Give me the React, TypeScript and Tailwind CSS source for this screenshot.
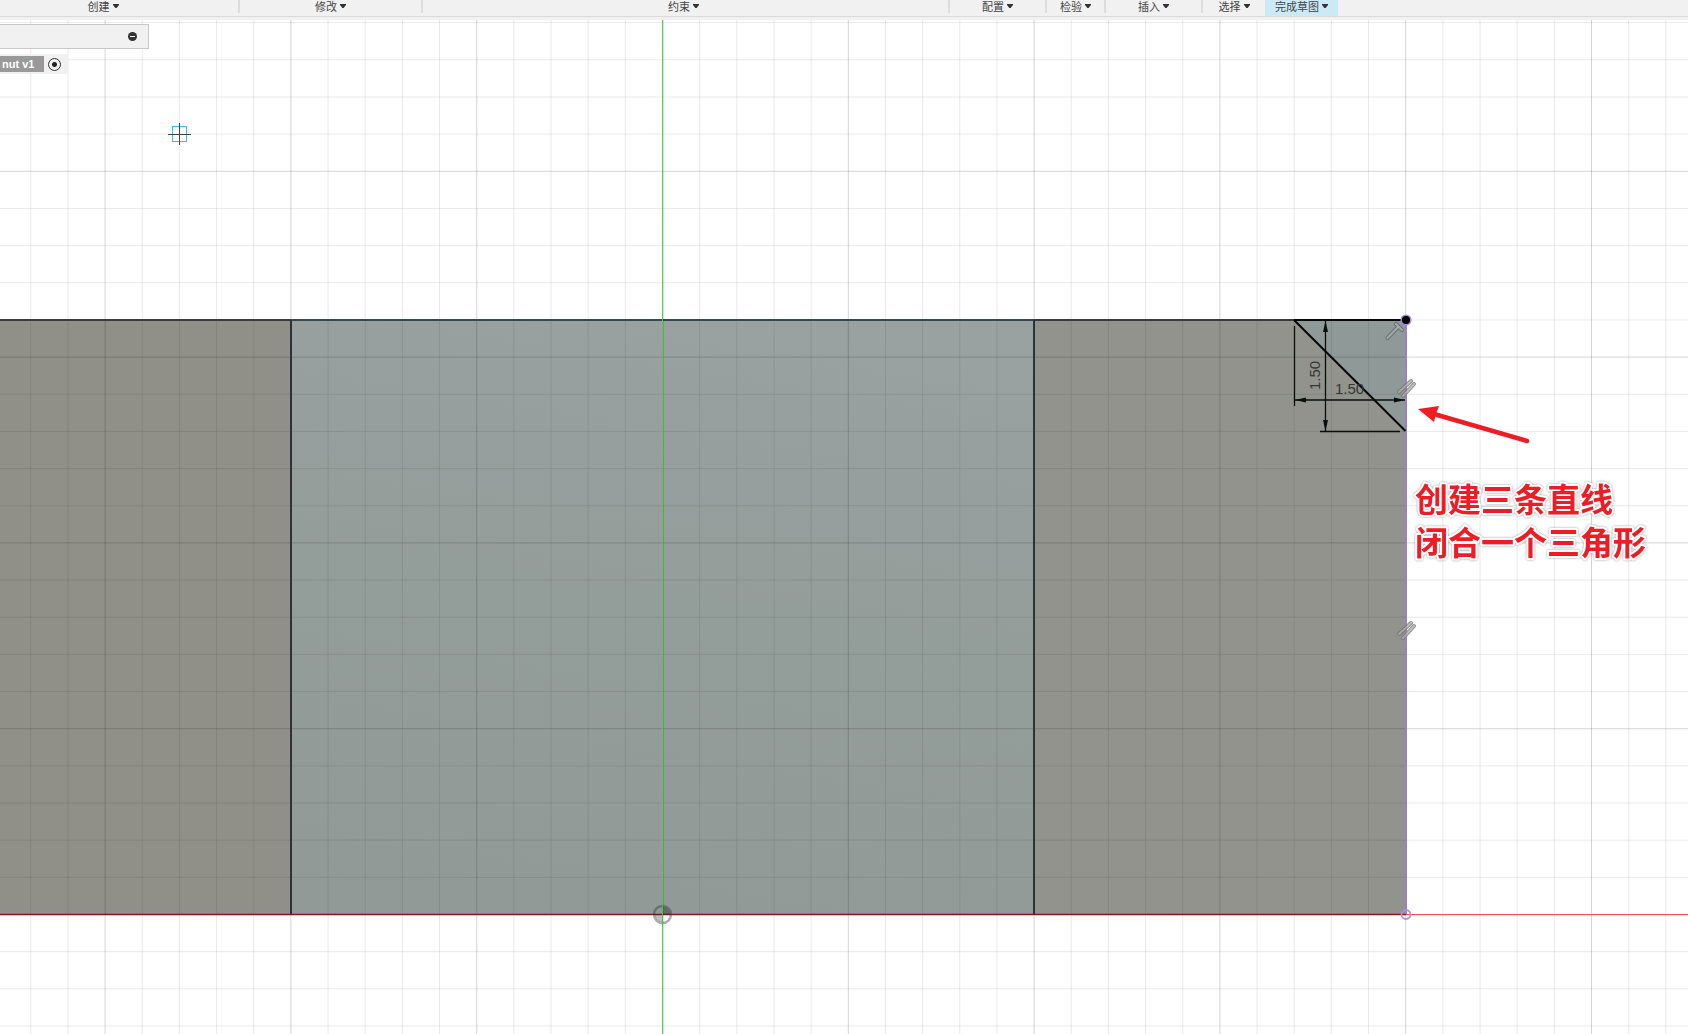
import React from "react";

const ORIGIN_X = 662.5;
const ORIGIN_Y = 894.5;
const CELL = 37.16;

const columns = Array.from({ length: 84 }, (_, i) => i - 17);
const rows = Array.from({ length: 50 }, (_, i) => i - 25);

const groups = [
  { label: "创建", width: "w-[240px]", inner: "pr-8" },
  { label: "修改", width: "w-[183px]", inner: "" },
  { label: "约束", width: "w-[527px]", inner: "pr-1" },
  { label: "配置", width: "w-[97px]", inner: "" },
  { label: "检验", width: "w-[59px]", inner: "" },
  { label: "插入", width: "w-[97px]", inner: "" },
];

function ToolButton({ label }: { label: string }) {
  return (
    <button type="button" className="flex h-4 items-start gap-[3px] whitespace-nowrap text-[11px] leading-[14px] text-[#444]">
      {label}
      <svg width="6" height="4" viewBox="0 0 6 4" className="mt-1" aria-hidden="true">
        <path d="M0 0h6v1L3.6 4H2.4L0 1z" fill="#333" />
      </svg>
    </button>
  );
}

function Toolbar() {
  return (
    <header className="flex h-5 shrink-0 flex-col overflow-hidden bg-[#f1f1f1]">
      <nav className="flex h-[17px] border-b border-[#dadada]">
        {groups.map((g) => (
          <div key={g.label} className={`flex shrink-0 ${g.width}`}>
            <div className={`flex grow justify-center ${g.inner}`}>
              <ToolButton label={g.label} />
            </div>
            <div className="h-[13px] w-0.5 bg-[#dcdcdc]" />
          </div>
        ))}
        <div className="flex w-[62px] shrink-0 justify-center">
          <ToolButton label="选择" />
        </div>
        <div className="flex w-[73px] shrink-0 justify-center bg-[#cbeaf6]">
          <ToolButton label="完成草图" />
        </div>
      </nav>
    </header>
  );
}

function Grid() {
  return (
    <g stroke="#000">
      {columns.filter((i) => i !== 0).map((i) => (
        <line key={`c${i}`} x1={ORIGIN_X + i * CELL} x2={ORIGIN_X + i * CELL} y1="0" y2="100%" strokeOpacity={i % 5 ? 0.085 : 0.17} />
      ))}
      {rows.filter((i) => i !== 0).map((i) => (
        <line key={`r${i}`} x1="0" x2="100%" y1={ORIGIN_Y + i * CELL} y2={ORIGIN_Y + i * CELL} strokeOpacity={i % 5 ? 0.085 : 0.17} />
      ))}
    </g>
  );
}

function Parallel({ x, y }: { x: number; y: number }) {
  return (
    <g transform={`translate(${x} ${y})`} strokeLinecap="round" opacity="0.8">
      <path d="M-6 5 6-6M-2 9 9-3" stroke="#737373" strokeWidth="4" />
      <path d="M-6 5 6-6M-2 9 9-3" stroke="#acadac" strokeWidth="2" />
    </g>
  );
}

function Sketch() {
  return (
    <svg className="absolute inset-0 h-full w-full" fill="none" role="img" aria-label="草图">
      <defs>
        <linearGradient id="teal" x1="0.6" y1="0" x2="0.4" y2="1">
          <stop offset="0" stopColor="#9aa1a1" />
          <stop offset="0.5" stopColor="#939d99" />
          <stop offset="1" stopColor="#919a97" />
        </linearGradient>
      </defs>
      <rect x="0" y="300" width="291" height="594.5" fill="#908f88" />
      <rect x="291" y="300" width="743" height="594.5" fill="url(#teal)" />
      <rect x="1034" y="300" width="372" height="594.5" fill="#91938c" />
      <path d="M1294 300H1405.500V411Z" fill="#8f9997" />
      <Grid />

      <path d="M0 300H291M1034 300H1406" stroke="#393a39" strokeWidth="2" />
      <path d="M291 300H1034" stroke="#39484c" strokeWidth="2" />
      <path d="M291 300V894M1034 300V894" stroke="#27343a" strokeWidth="2" />
      <path d="M663.500 0V1100" stroke="#000" strokeOpacity="0.12" />
      <path d="M662.500 0V1100" stroke="#46d44c" />
      <line x1="1406" x2="100%" y1="894.5" y2="894.5" stroke="#e45a5a" />
      <line x1="1406" x2="100%" y1="895.5" y2="895.5" stroke="#000" strokeOpacity="0.1" />
      <path d="M0 894.500H1406" stroke="#8a1416" strokeWidth="1.500" />

      <g>
        <circle cx="662.5" cy="894.5" r="8.500" stroke="#333" strokeOpacity="0.4" strokeWidth="2.500" />
        <path d="M662.500 894.500V887a7.500 7.500 0 0 1 7.500 7.500z" fill="#000" fillOpacity="0.3" />
        <path d="M662.500 894.500V902a7.500 7.500 0 0 1-7.500-7.500z" fill="#000" fillOpacity="0.25" />
        <path d="M662.500 884V905" stroke="#2fd03a" />
      </g>

      <path d="M1406 300V894" stroke="#9a80cc" strokeWidth="2" />
      <path d="M1294 300H1405.500M1294 300 1405.500 411" stroke="#050805" strokeWidth="2" />
      <path d="M1294.500 306V386M1320 411.500H1400M1325.500 301V411M1295 380H1405" stroke="#0a0f0c" strokeWidth="1.300" />
      <path d="M1325.500 301l2.500 11h-5zM1325.500 411l2.500-11h-5zM1295 380l11-2.500v5zM1405 380l-11-2.500v5z" fill="#0a0f0c" />
      <g fill="#353735" fontFamily="'Liberation Sans', Arial, sans-serif" fontSize="15">
        <text x="1335" y="374">1.50</text>
        <text transform="translate(1320 370) rotate(-90)">1.50</text>
      </g>

      <g strokeLinecap="round">
        <path d="M1387.500 318 1398 307M1396 304l6 6" stroke="#6b7170" strokeWidth="4" />
        <path d="M1387.500 318 1398 307M1396 304l6 6" stroke="#a3abaa" strokeWidth="2" />
      </g>
      <Parallel x={1405} y={367} />
      <Parallel x={1405} y={609} />
      <circle cx="1406" cy="300" r="4.500" fill="#000" stroke="#a783ea" strokeWidth="2" />
      <circle cx="1406" cy="300" r="4" fill="#000" />
      <circle cx="1406" cy="894.5" r="4.500" stroke="#b08cf0" strokeWidth="1.800" />

      <rect x="172.5" y="106.500" width="14" height="15" stroke="#35bdfa" />
      <path d="M168 114.500H191M179.500 103V125" stroke="#3d4245" />

      <path d="M1527 421 1434 394" stroke="#ee1c24" strokeWidth="4.500" strokeLinecap="round" />
      <path d="M1418 389 1439 386 1436 394 1434 402Z" fill="#ee1c24" />
      <g
        className="[filter:drop-shadow(0_0_1px_#999)]"
        fill="#ee1c24"
        stroke="#fff"
        strokeWidth="4"
        strokeLinejoin="round"
        paintOrder="stroke"
        fontFamily="'Noto Sans CJK SC', sans-serif"
        fontWeight="700"
        fontSize="33"
      >
        <text x="1415" y="492">创建三条直线</text>
        <text x="1415" y="535">闭合一个三角形</text>
      </g>
    </svg>
  );
}

function Browser() {
  return (
    <aside className="absolute left-0 top-1 flex flex-col items-start gap-[5px]">
      <div className="flex h-[25px] w-[149px] items-center justify-end border border-l-0 border-[#c8c8c8] bg-[#f1f1f1] pr-[11px]">
        <button type="button" aria-label="折叠">
          <svg width="9" height="9" viewBox="0 0 9 9" className="block">
            <circle cx="4.5" cy="4.500" r="4.500" fill="#333" />
            <path d="M2 4.500h5" stroke="#fff" />
          </svg>
        </button>
      </div>
      <div className="flex h-5 w-[68px] items-center gap-1 bg-[#f1f1f1]">
        <label htmlFor="component" className="h-4 w-11 whitespace-nowrap bg-[#999] pl-0.5 text-[11px] font-bold leading-4 text-white">
          nut v1
        </label>
        <input
          id="component"
          type="radio"
          defaultChecked
          className="size-[13px] appearance-none rounded-full border border-[#333] bg-[radial-gradient(circle,#222_0_2px,transparent_3px)]"
        />
      </div>
    </aside>
  );
}

export default function App() {
  return (
    <div className="flex h-screen flex-col overflow-hidden bg-white font-['Liberation_Sans','Noto_Sans_CJK_SC',sans-serif]">
      <Toolbar />
      <main className="relative grow overflow-hidden bg-white">
        <Sketch />
        <Browser />
      </main>
    </div>
  );
}
